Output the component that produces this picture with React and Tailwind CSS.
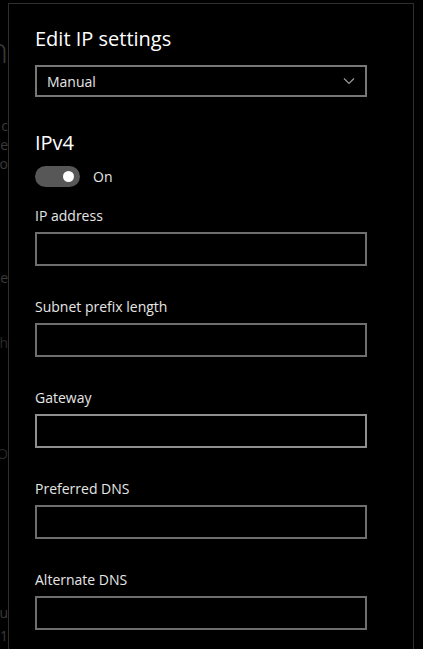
import React from "react";

const fields = ["IP address", "Subnet prefix length", "Gateway", "Preferred DNS", "Alternate DNS"];

function Field({ label, active }) {
  return (
    <div className="flex flex-col">
      <label className="h-[24px] leading-[24px] text-[14px] text-[#e6e6e6]">{label}</label>
      <div className={`mt-[4px] w-[332px] h-[34px] border-2 ${active ? "border-[#8f8f8f]" : "border-[#6e6e6e]"} bg-black`} />
    </div>
  );
}

export default function App() {
  return (
    <div className="w-[423px] h-[649px] bg-black flex overflow-hidden" style={{ fontFamily: '"Segoe UI", "Open Sans", sans-serif' }}>
      <div className="w-[8px] shrink-0 overflow-hidden text-[#3a3a3a] flex flex-col items-end whitespace-nowrap">
        <span className="mt-[30px] text-[34px] leading-[40px] font-light">h</span>
        <span className="mt-[46px] text-[14px] leading-[19px]">c</span>
        <span className="text-[14px] leading-[19px]">ne</span>
        <span className="text-[14px] leading-[19px]">to</span>
        <span className="mt-[95px] text-[14px] leading-[19px]">te</span>
        <span className="mt-[46px] text-[14px] leading-[19px] text-[#2a2a2a]">h</span>
        <span className="mt-[92px] text-[14px] leading-[19px] text-[#2a2a2a]">O</span>
        <span className="mt-[140px] text-[14px] leading-[19px]">u</span>
        <span className="mt-[4px] text-[14px] leading-[19px]">1</span>
      </div>
      <div className="mt-[3px] w-[406px] shrink-0 border-l border-t border-r border-[#2e2e2e] pl-[26px] pt-[20px]">
        <h1 className="text-[20px] leading-[30px] text-white">Edit IP settings</h1>
        <div className="mt-[11px] w-[332px] h-[32px] border-2 border-[#777] flex items-center justify-between pl-[10px] pr-[10px]">
          <span className="text-[14px] text-[#e6e6e6]">Manual</span>
          <svg width="12" height="8" viewBox="0 0 12 8" fill="none">
            <path d="M1 1.5 L6 6.5 L11 1.5" stroke="#9a9a9a" strokeWidth="1.2" />
          </svg>
        </div>
        <div className="mt-[32px] text-[20px] leading-[28px] text-white">IPv4</div>
        <div className="mt-[9px] flex items-center gap-[13px]">
          <div className="w-[45px] h-[21px] rounded-full bg-[#575757] flex items-center justify-end pr-[6px]">
            <div className="w-[11px] h-[11px] rounded-full bg-white" />
          </div>
          <span className="text-[14px] text-[#e6e6e6]">On</span>
        </div>
        <div className="mt-[17px] flex flex-col gap-[29px]">
          {fields.map((f) => (
            <Field key={f} label={f} active={f === "Gateway"} />
          ))}
        </div>
      </div>
    </div>
  );
}
